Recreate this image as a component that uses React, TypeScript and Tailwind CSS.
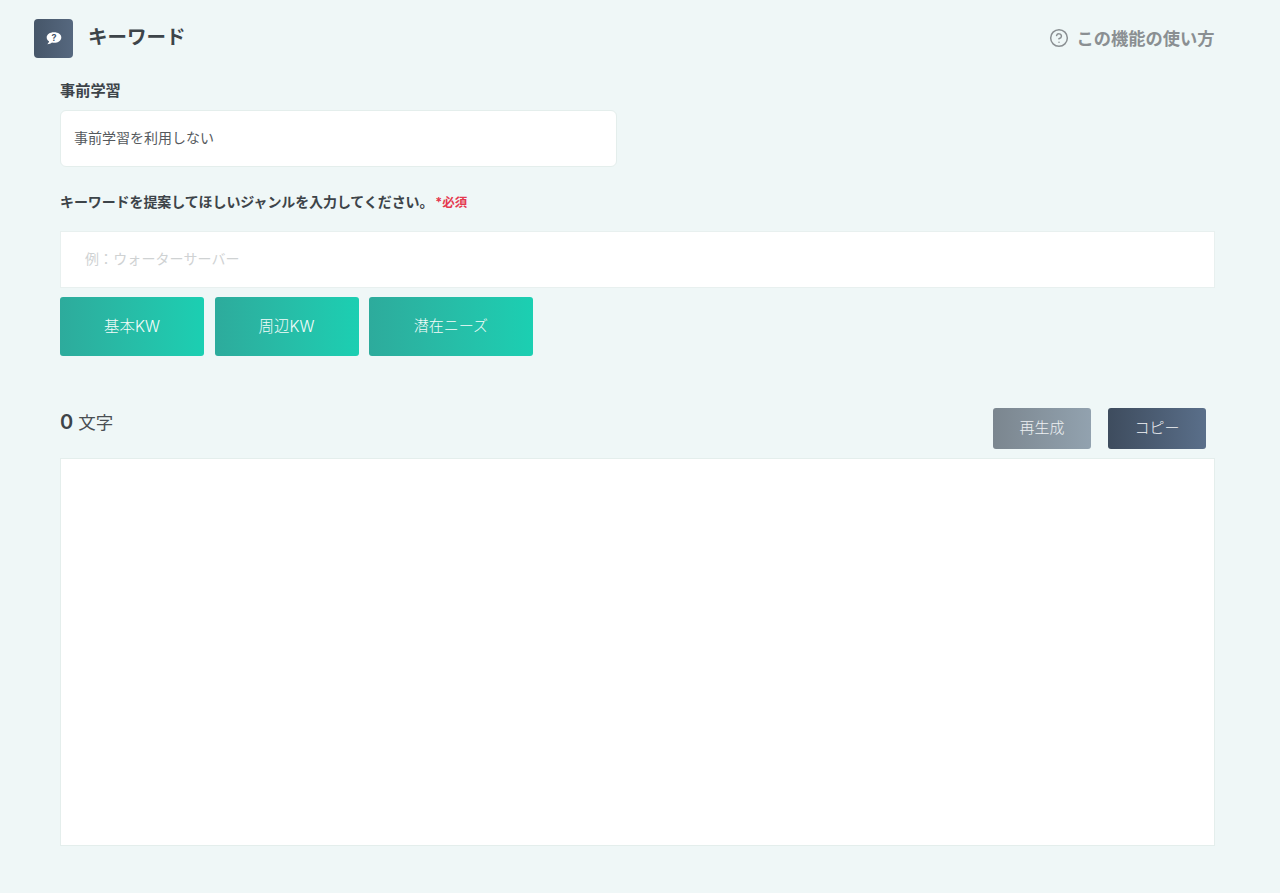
import { CircleHelp } from 'lucide-react';

const font = { fontFamily: '"Inter", "Noto Sans CJK JP", sans-serif' };

function KeywordIcon() {
  return (
    <div className="w-[39px] h-[39px] rounded-[4px] bg-gradient-to-r from-[#465669] to-[#56687f] flex items-center justify-center">
      <svg width="18" height="16" viewBox="0 0 16 14">
        <path d="M8 1C4.200 1 1.500 3 1.500 5.600c0 1.500.9 2.700 2.200 3.500-.2 1-.8 1.900-1.600 2.600 1.600-.1 3-.7 4.100-1.600.6.100 1.200.2 1.800.2 3.800 0 6.500-2 6.500-4.700S11.800 1 8 1z" fill="#fff" />
        <text x="8" y="8.600" textAnchor="middle" fontSize="8" fontWeight="700" fill="#46566b">?</text>
      </svg>
    </div>
  );
}

export default function App() {
  return (
    <div className="min-h-[893px] bg-[#eff7f7] text-[#3d4449] overflow-hidden" style={font}>
      <header className="flex items-center justify-between pl-[34px] pr-[65.500px] pt-[19px]">
        <div className="flex items-center gap-[15px]">
          <KeywordIcon />
          <h1 className="text-[19.500px] font-bold leading-[37px] mb-[2px]">キーワード</h1>
        </div>
        <a className="flex items-center gap-[7px] text-[17.250px] font-bold text-[#8a8f92]">
          <CircleHelp size={20} strokeWidth={1.8} className="mb-[2px]" />
          この機能の使い方
        </a>
      </header>

      <main className="pl-[60px] pr-[65px]">
        <label className="block mt-[22px] text-[15.200px] font-bold leading-[22px]">事前学習</label>
        <div className="mt-[8px] w-[557px] h-[57px] bg-white border border-[#e4eeec] rounded-[6px] flex items-center pl-[13px] pb-[3px] text-[14px] text-[#55595d]">
          事前学習を利用しない
        </div>

        <p className="mt-[25px] text-[14px] tracking-[-0.1px] font-bold leading-[20px]">
          キーワードを提案してほしいジャンルを入力してください。
          <span className="ml-[2px] text-[12.500px] text-[#e5394f]">*必須</span>
        </p>

        <div className="mt-[18px] h-[57px] bg-white border border-[#e8f0ef] flex items-center pl-[24px] pb-[3px] text-[14px] tracking-[0.1px] text-[#cfd2d3]">
          例：ウォーターサーバー
        </div>

        <div className="mt-[9px] flex gap-[10.500px]">
          <button className="w-[144px] h-[59px] rounded-[3px] bg-gradient-to-r from-[#2dab9c] to-[#1bcfb2] text-[15.500px] font-light text-[#f4fcfa]">基本KW</button>
          <button className="w-[144px] h-[59px] rounded-[3px] bg-gradient-to-r from-[#2dab9c] to-[#1bcfb2] text-[15.500px] font-light text-[#f4fcfa]">周辺KW</button>
          <button className="w-[164px] h-[59px] rounded-[3px] bg-gradient-to-r from-[#2dab9c] to-[#1bcfb2] text-[15px] font-light text-[#f4fcfa]">潜在ニーズ</button>
        </div>

        <div className="mt-[52px] flex justify-between items-start">
          <div className="flex items-baseline gap-[5px] mt-[2px]">
            <span className="text-[20px] font-semibold leading-[24px]">0</span>
            <span className="text-[17.500px] text-[#4a4f53]">文字</span>
          </div>
          <div className="flex gap-[17px] pr-[9px]">
            <button className="w-[98px] h-[41px] rounded-[3px] bg-gradient-to-r from-[#7b868f] to-[#92a2af] text-[15px] font-light text-[#eef1f3]">再生成</button>
            <button className="w-[98px] h-[41px] rounded-[3px] bg-gradient-to-r from-[#3e4c5e] to-[#5a6f8a] text-[15px] font-light text-[#f2f4f6]">コピー</button>
          </div>
        </div>

        <div className="mt-[9px] h-[388px] bg-white border border-[#e4eeec]" />
      </main>
    </div>
  );
}
